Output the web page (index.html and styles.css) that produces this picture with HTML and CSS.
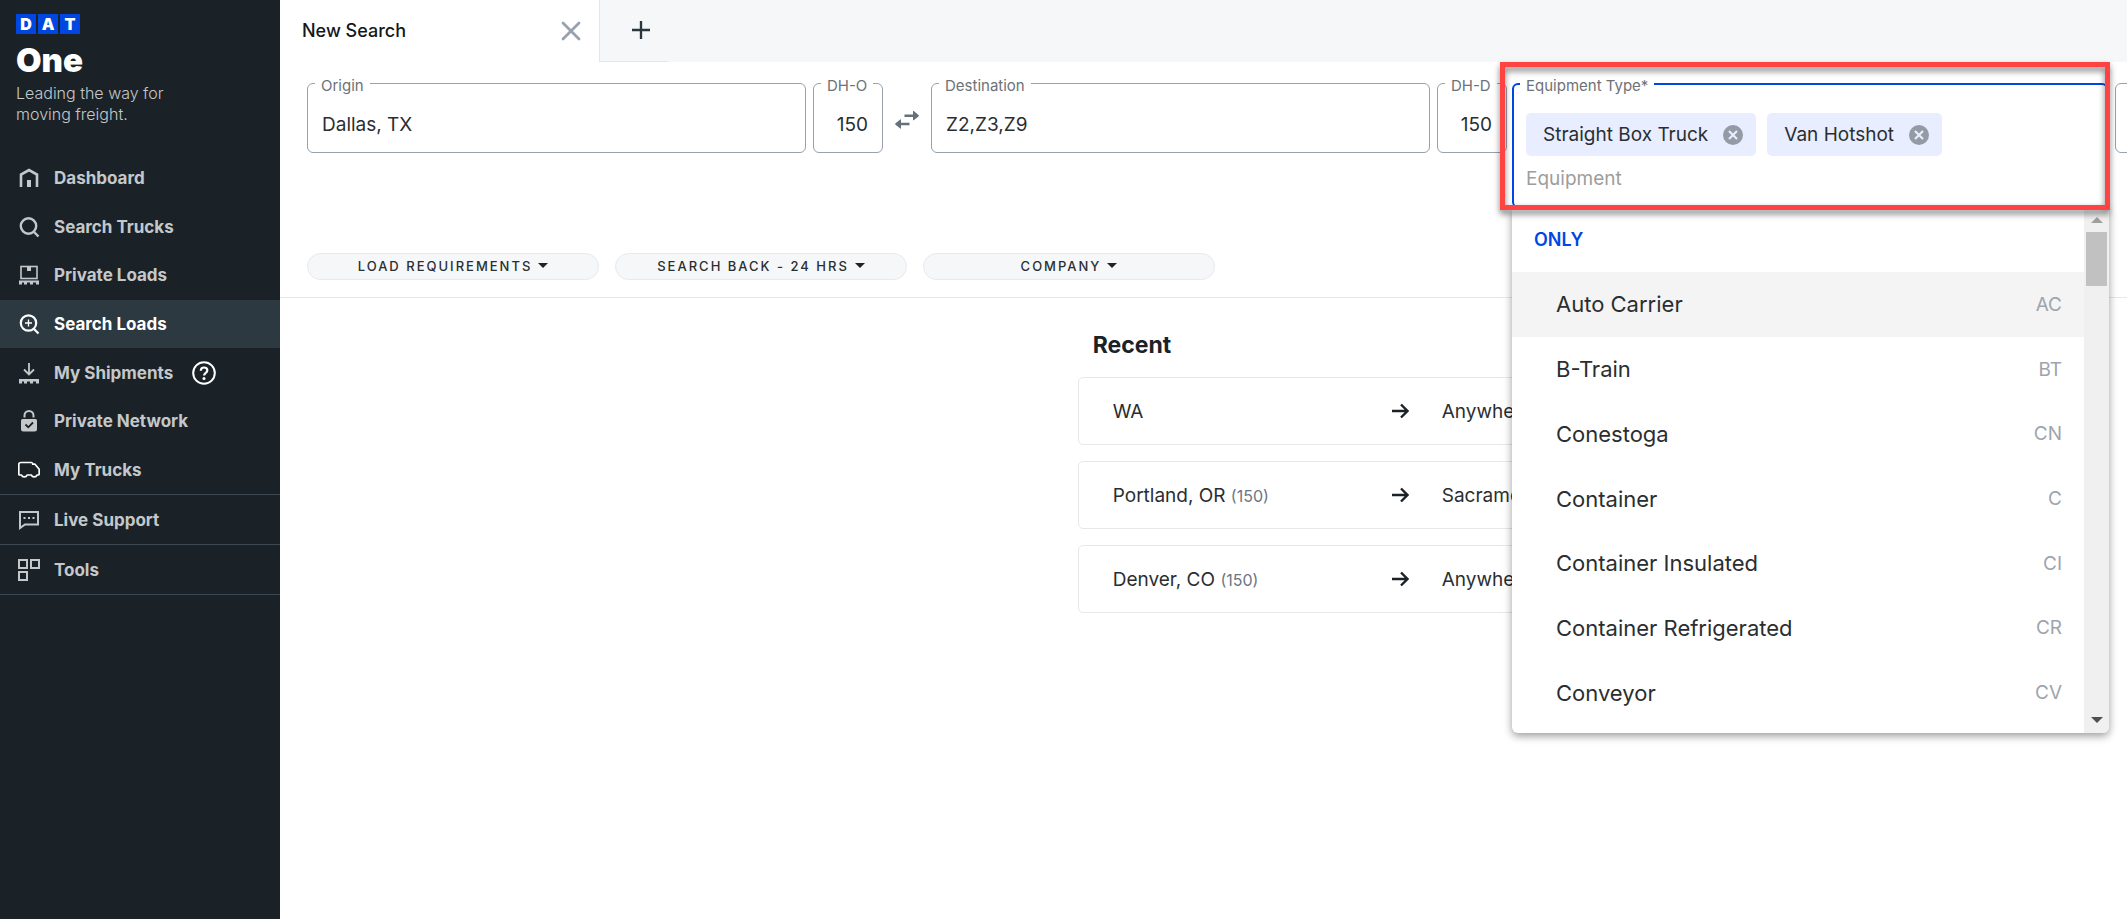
FILE: index.html
```html
<!DOCTYPE html>
<html lang="en">
<head>
  <meta charset="UTF-8" />
  <meta name="viewport" content="width=device-width, initial-scale=1.0" />
  <title>DAT One - Search Loads</title>
  <link rel="stylesheet" href="styles.css">
</head>
<body>
  <aside class="sidebar">
    <div class="brand">
      <div class="logo"><span>D</span><span>A</span><span>T</span></div>
      <div class="brand-name">One</div>
      <p class="tagline">Leading the way for moving freight.</p>
    </div>

    <nav class="nav">
      <div class="nav-main">
        <a class="nav-item" href="#">
          <svg class="icon" viewBox="0 0 22 22"><path d="M3 20V7.500L11 3l8 4.500V20" fill="none" stroke="currentColor" stroke-width="2.600"/><path d="M9 13h4v7H9z" fill="currentColor"/></svg>
          Dashboard
        </a>
        <a class="nav-item" href="#">
          <svg class="icon" viewBox="0 0 22 22"><g fill="none" stroke="currentColor" stroke-width="2.400"><circle cx="10.500" cy="10" r="7.700"/><path d="M15.500 15.500l5 5"/></g></svg>
          Search Trucks
        </a>
        <a class="nav-item" href="#">
          <svg class="icon" viewBox="0 0 22 22"><rect x="3" y="2.500" width="16" height="12" fill="none" stroke="currentColor" stroke-width="1.600"/><path d="M9 3h4v4H9zM1 16.500h20v2H1zM1 18.500h3v2H1zM6 18.500h3v2H6zM12 18.500h3v2h-3zM18 18.500h3v2h-3z" fill="currentColor"/></svg>
          Private Loads
        </a>
        <a class="nav-item active" href="#">
          <svg class="icon" viewBox="0 0 22 22"><g fill="none" stroke="currentColor" stroke-width="2.200"><circle cx="10.500" cy="10" r="7.700"/><path d="M15.500 15.500l5 5"/><path d="M10.500 6.500v7M7 10h7" stroke-width="1.300"/></g></svg>
          Search Loads
        </a>
        <a class="nav-item" href="#">
          <svg class="icon" viewBox="0 0 22 22"><path d="M11 1v11M6 7.500l5 5 5-5" fill="none" stroke="currentColor" stroke-width="1.800"/><path d="M1 17h20v2.500H1zM1 19.500h3v2H1zM6 19.500h3v2H6zM12 19.500h3v2h-3zM18 19.500h3v2h-3z" fill="currentColor"/></svg>
          My Shipments
          <svg class="help" viewBox="0 0 24 24"><circle cx="12" cy="12" r="10.800" fill="none" stroke="currentColor" stroke-width="2"/><path d="M8.800 9.800c0-2 1.400-3.300 3.300-3.300s3.200 1.200 3.200 2.900c0 2.400-3.200 2.500-3.200 5.100" fill="none" stroke="currentColor" stroke-width="2.200"/><circle cx="12" cy="17.500" r="1.500" fill="currentColor"/></svg>
        </a>
        <a class="nav-item" href="#">
          <svg class="icon" viewBox="0 0 22 22"><path d="M6.500 7.500V5.500a4.500 4.500 0 0 1 9 0v2" fill="none" stroke="currentColor" stroke-width="2"/><path d="M4.500 9h13a1.500 1.500 0 0 1 1.500 1.500V19a2.500 2.500 0 0 1-2.500 2.500h-11A2.500 2.500 0 0 1 3 19v-8.500A1.500 1.500 0 0 1 4.500 9z" fill="currentColor"/><path d="M7.500 14.500l2.800 2.800 4.700-4.800" fill="none" stroke="#1a2228" stroke-width="1.800"/></svg>
          Private Network
        </a>
        <a class="nav-item" href="#">
          <svg class="icon light" viewBox="0 0 22 22"><path d="M3.500 16H2Q.8 16 .8 15V5.500Q.8 3.500 3 3.500h10.500q1.200 0 1.200 1.700h2.300l4.200 5V15q0 1-1.200 1h-1c-.8 2.600-4.800 2.600-5.600 0H9.100c-.8 2.600-4.800 2.600-5.600 0z" fill="none" stroke="currentColor" stroke-width="1.700" stroke-linejoin="round"/></svg>
          My Trucks
        </a>
      </div>
      <a class="nav-item ruled" href="#">
        <svg class="icon" viewBox="0 0 22 22"><path d="M2 3h18v12.500H7L2 19z" fill="none" stroke="currentColor" stroke-width="2"/><path d="M5.500 8h2v2h-2zM10 8h2v2h-2zM14.500 8h2v2h-2z" fill="currentColor"/></svg>
        Live Support
      </a>
      <a class="nav-item ruled" href="#">
        <svg class="icon" viewBox="0 0 22 22"><g fill="none" stroke="currentColor" stroke-width="2"><path d="M1 1h8v8H1zM13 1h8v8h-8zM1 13h8v8H1z"/></g></svg>
        Tools
      </a>
    </nav>
  </aside>

  <main class="main">
    <div class="tabs">
      <div class="tab">
        <span>New Search</span>
        <button class="icon-button" aria-label="Close tab">
          <svg viewBox="0 0 20 22"><path d="M2 4l16 16M18 4L2 20" stroke="#98a1ae" stroke-width="2.800" stroke-linecap="round"/></svg>
        </button>
      </div>
      <button class="tab-add" aria-label="Add tab">
        <svg viewBox="0 0 20 20"><path d="M10 0v20M0 10h20" stroke="#2b363e" stroke-width="2.600"/></svg>
      </button>
    </div>

    <form class="search">
      <div class="fields">
        <div class="field wide">
          <label for="origin">Origin</label>
          <input id="origin" type="text" value="Dallas, TX" />
        </div>
        <div class="field miles">
          <label for="dho">DH-O</label>
          <input id="dho" type="text" value="150" />
        </div>
        <button type="button" class="swap" aria-label="Swap origin and destination">
          <svg viewBox="0 0 24 20"><path d="M9.500 4.500h8.500V1.200Q18 .5 18.700 1L23.500 5q.6.700 0 1.400L18.700 10.200Q18 10.600 18 10V7H9.500zM14.500 12.800H6V9.600Q6 9 5.300 9.400L.5 13.300q-.6.700 0 1.400l4.800 3.900Q6 19 6 18.400v-3.200h8.500z" fill="#65707d"/></svg>
        </button>
        <div class="field wide">
          <label for="destination">Destination</label>
          <input id="destination" type="text" value="Z2,Z3,Z9" />
        </div>
        <div class="field miles">
          <label for="dhd">DH-D</label>
          <input id="dhd" type="text" value="150" />
        </div>

        <div class="field equipment">
          <label for="equipment">Equipment Type*</label>
          <div class="chips">
            <span class="chip">Straight Box Truck
              <button type="button" class="chip-remove" aria-label="Remove Straight Box Truck"><svg viewBox="0 0 20 20"><circle cx="10" cy="10" r="10" fill="#959ba5"/><path d="M6 6l8 8M14 6l-8 8" stroke="#e8eeff" stroke-width="2.200"/></svg></button>
            </span>
            <span class="chip">Van Hotshot
              <button type="button" class="chip-remove" aria-label="Remove Van Hotshot"><svg viewBox="0 0 20 20"><circle cx="10" cy="10" r="10" fill="#959ba5"/><path d="M6 6l8 8M14 6l-8 8" stroke="#e8eeff" stroke-width="2.200"/></svg></button>
            </span>
          </div>
          <input id="equipment" type="text" placeholder="Equipment" />

          <div class="dropdown">
            <div class="options">
              <div class="group">ONLY</div>
              <ul>
                <li class="hover">Auto Carrier <span>AC</span></li>
                <li>B-Train <span>BT</span></li>
                <li>Conestoga <span>CN</span></li>
                <li>Container <span>C</span></li>
                <li>Container Insulated <span>CI</span></li>
                <li>Container Refrigerated <span>CR</span></li>
                <li>Conveyor <span>CV</span></li>
              </ul>
            </div>
            <div class="scrollbar">
              <div class="arrow-up"></div>
              <div class="thumb"></div>
              <div class="arrow-down"></div>
            </div>
          </div>
          <div class="highlight"></div>
        </div>

        <div class="more">
          <div class="field next">
            <input type="text" aria-label="Length" />
          </div>
        </div>
      </div>

      <div class="filters">
        <button type="button" class="filter">LOAD REQUIREMENTS<i class="caret"></i></button>
        <button type="button" class="filter">SEARCH BACK - 24 HRS<i class="caret"></i></button>
        <button type="button" class="filter">COMPANY<i class="caret"></i></button>
      </div>
    </form>

    <section class="results">
      <div class="recent">
        <h2>Recent</h2>
        <div class="card">
          <div class="from">WA</div>
          <svg class="arrow" viewBox="0 0 18 16"><path d="M1 8h15M10 1.500L16.500 8 10 14.500" fill="none" stroke="#1a2228" stroke-width="2.400"/></svg>
          <div>Anywhere</div>
        </div>
        <div class="card">
          <div class="from">Portland, OR <small>(150)</small></div>
          <svg class="arrow" viewBox="0 0 18 16"><path d="M1 8h15M10 1.500L16.500 8 10 14.500" fill="none" stroke="#1a2228" stroke-width="2.400"/></svg>
          <div>Sacramento, CA</div>
        </div>
        <div class="card">
          <div class="from">Denver, CO <small>(150)</small></div>
          <svg class="arrow" viewBox="0 0 18 16"><path d="M1 8h15M10 1.500L16.500 8 10 14.500" fill="none" stroke="#1a2228" stroke-width="2.400"/></svg>
          <div>Anywhere</div>
        </div>
      </div>
    </section>
  </main>
</body>
</html>
```

FILE: styles.css
```css
* {
  box-sizing: border-box;
}

body {
  margin: 0;
  min-height: 100vh;
  display: flex;
  background: #fff;
  color: #2a2e31;
  font-family: Inter, "Liberation Sans", sans-serif;
  font-size: 19px;
}

button,
input {
  font: inherit;
  color: inherit;
  border: none;
  background: none;
  padding: 0;
}

button {
  cursor: pointer;
}

svg {
  display: block;
}

/* sidebar */
.sidebar {
  flex: 0 0 280px;
  background: #1a2228;
  color: #c5c8ca;
}

.brand {
  padding: 14px 16px 0;
  height: 154px;
}

.logo {
  display: flex;
  gap: 2px;
}

.logo span {
  width: 20px;
  height: 20px;
  background: #0046e0;
  color: #fff;
  font-size: 16px;
  font-weight: 900;
  line-height: 20px;
  text-align: center;
}

.brand-name {
  margin-top: 6px;
  color: #fff;
  font-size: 33px;
  font-weight: 900;
  line-height: 40px;
}

.tagline {
  margin: 3px 0 0;
  width: 180px;
  font-size: 16px;
  font-weight: 300;
  line-height: 21px;
}

.nav-main {
  height: 340px;
  display: flex;
  flex-direction: column;
}

.nav-item {
  flex: 1;
  display: flex;
  align-items: center;
  padding-left: 18px;
  color: inherit;
  font-size: 17px;
  font-weight: 700;
  text-decoration: none;
}

.nav-item.active {
  background: #2d3941;
  color: #fff;
}

.nav-item.ruled {
  height: 50px;
  border-top: 1px solid #3b4851;
}

.nav-item.ruled:last-child {
  height: 51px;
  border-bottom: 1px solid #3b4851;
}

.icon {
  width: 22px;
  height: 22px;
  margin-right: 14px;
}

.icon.light,
.help {
  color: #fff;
}

.help {
  width: 24px;
  height: 24px;
  margin-left: 19px;
}

/* tabs */
.main {
  flex: 1;
  min-width: 0;
  overflow: hidden;
}

.tabs {
  display: flex;
  height: 62px;
  background: #f5f7f9;
}

.tab {
  width: 319px;
  display: flex;
  align-items: center;
  justify-content: space-between;
  padding: 0 18px 2px 22px;
  background: #fff;
  color: #14181b;
  font-size: 18px;
  font-weight: 500;
}

.icon-button {
  width: 20px;
}

.tab-add svg {
  width: 18px;
}

.tab-add {
  width: 69px;
  padding: 0 0 2px 32px;
  border-left: 1px solid #e4e7ea;
  border-bottom: 1px solid #e4e7ea;
}

/* search form */
.search {
  border-bottom: 1px solid #e6e8eb;
  padding-bottom: 17px;
}

.fields {
  display: flex;
  align-items: flex-start;
  padding: 21px 0 0 27px;
}

.field {
  position: relative;
  height: 70px;
  border: 1px solid #98a1ae;
  border-radius: 6px;
}

.field label {
  position: absolute;
  top: -7px;
  left: 7px;
  padding: 0 6px;
  background: #fff;
  color: #6d7277;
  font-size: 15px;
  line-height: 18px;
  white-space: nowrap;
}

.field input {
  width: 100%;
  height: 68px;
  padding: 12px 14px 0;
  outline: none;
}

.field.wide {
  flex: 1;
}

.field.miles {
  flex: 0 0 70px;
  margin-left: 7px;
}

.field.miles input {
  text-align: right;
}

.swap {
  flex: 0 0 48px;
  height: 74px;
  padding-left: 12px;
}

.swap svg {
  width: 24px;
  height: 20px;
}

.field.equipment {
  flex: 0 0 596px;
  height: 125px;
  margin-left: 5px;
  padding: 28px 12px 0;
  border: 2px solid #0046e0;
}

.field.equipment label {
  top: -8px;
  left: 6px;
}

.field.equipment input {
  height: 44px;
  padding: 0;
}

.field.equipment input::placeholder {
  color: #9d9d9d;
}

.chips {
  display: flex;
  gap: 11px;
}

.chip {
  display: flex;
  align-items: center;
  gap: 15px;
  height: 43px;
  padding: 0 13px 0 17px;
  background: #e8eeff;
  border-radius: 5px;
}

.chip-remove {
  width: 20px;
}

.more {
  width: 12px;
  margin: 0 0 0 7px;
}

.field.next {
  width: 180px;
}

/* equipment menu */
.dropdown {
  position: absolute;
  z-index: 1;
  top: 123px;
  left: -2px;
  width: 597px;
  height: 525px;
  display: flex;
  overflow: hidden;
  background: #fff;
  border-radius: 0 0 6px 6px;
  box-shadow: 0 3px 8px rgba(0, 0, 0, 0.4);
}

.options {
  flex: 1;
}

.group {
  padding-left: 22px;
  color: #0046e0;
  font-size: 18px;
  font-weight: 600;
  line-height: 64px;
}

.options ul {
  display: flex;
  flex-direction: column;
  height: 453px;
  list-style: none;
  margin: 0;
  padding: 0;
}

.options li {
  flex: 1;
  display: flex;
  align-items: center;
  justify-content: space-between;
  padding: 0 22px 0 44px;
  font-size: 22px;
}

.options li.hover {
  background: #f4f4f4;
}

.options li span {
  color: #9ea4ae;
  font-size: 19px;
}

.scrollbar {
  width: 25px;
  display: flex;
  flex-direction: column;
  align-items: center;
  padding: 9px 0 10px;
  background: #f0f0f0;
}

.thumb {
  width: 21px;
  height: 54px;
  margin-top: 9px;
  background: #c1c1c1;
}

.arrow-up,
.arrow-down {
  border: 6px solid transparent;
  border-top: none;
  border-bottom: 6px solid #a0a0a0;
}

.arrow-down {
  margin-top: auto;
  border-top: 6px solid #505050;
  border-bottom: none;
}

.highlight {
  position: absolute;
  z-index: 2;
  top: -23px;
  left: -14px;
  width: 610px;
  height: 148px;
  border: 5px solid #ff4242;
  filter: drop-shadow(0 4px 3px rgba(0, 0, 0, 0.5));
  pointer-events: none;
}

/* filters */
.filters {
  display: flex;
  gap: 16px;
  padding: 45px 0 0 27px;
}

.filter {
  width: 292px;
  height: 27px;
  display: flex;
  align-items: center;
  justify-content: center;
  gap: 6px;
  padding-bottom: 2px;
  background: #f5f7f9;
  border: 1px solid #e6e9ee;
  border-radius: 14px;
  font-size: 13px;
  font-weight: 500;
  letter-spacing: 2px;
}

.caret {
  border: 5px solid transparent;
  border-top: 5px solid #1f2326;
  border-bottom: none;
}

/* recent searches */
.results {
  padding: 32px 25px 0;
}

.recent {
  width: 57%;
  margin-left: auto;
}

.recent h2 {
  margin: 0 0 17px 15px;
  color: #1a2228;
  font-size: 23px;
  font-weight: 700;
  line-height: 30px;
}

.card {
  display: flex;
  align-items: center;
  height: 68px;
  margin-bottom: 16px;
  padding-left: 34px;
  border: 1px solid #e6e8eb;
  border-radius: 5px;
}

.from {
  width: 278px;
}

.card small {
  color: #6b7684;
  font-size: 16px;
}

.arrow {
  width: 18px;
  height: 16px;
  margin-right: 33px;
}
```
